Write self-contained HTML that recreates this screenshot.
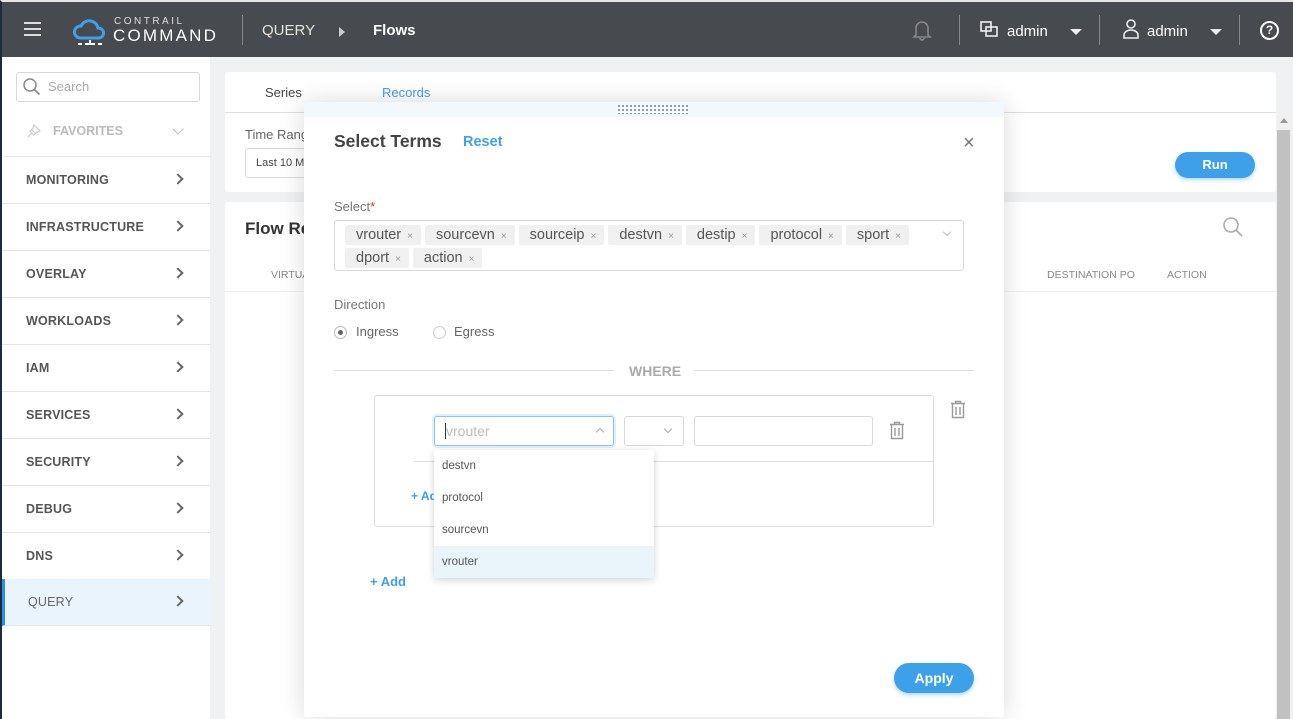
<!DOCTYPE html>
<html><head><meta charset="utf-8"><style>
*{box-sizing:border-box;margin:0;padding:0}
body{width:1293px;height:719px;overflow:hidden;background:#f0f1f2;font-family:"Liberation Sans",sans-serif;position:relative;color:#555}
.a{position:absolute}
.hdr{left:0;top:0;width:1293px;height:57px;background:#474a4f;border-top:2px solid #e6e6e6;border-left:2px solid #1d2a3f}
.hdr .t{color:#fff;font-size:15px}
.sb{left:0;top:57px;width:210px;height:662px;background:#fff;border-left:2px solid #1d2a3f}
.item{position:absolute;left:2px;width:208px;height:47px;border-bottom:1px solid #e5e5e5;font-size:12.5px;font-weight:bold;color:#555;padding:16px 0 0 24px;letter-spacing:.2px}
.item .ch{position:absolute;right:28px;top:18px;width:8px;height:8px;border-right:2px solid #666;border-top:2px solid #666;transform:rotate(45deg)}
.card{background:#fff;border-radius:3px}
.tag{display:inline-block;background:#f0f0f0;border-radius:2px;height:20px;padding:0 8px 0 11px;font-size:14.5px;color:#555;line-height:20px;margin:0 4px 3px 0}
.tag i{font-style:normal;font-size:10px;color:#999;margin-left:6px}
.inp{border:1px solid #d9d9d9;border-radius:3px;background:#fff}
</style></head><body>
<div class="a hdr">
 <div class="a" style="left:22px;top:20px;width:17px;height:2px;background:#ddd;box-shadow:0 6px 0 #ddd,0 12px 0 #ddd"></div>
 <svg class="a" style="left:70px;top:14px" width="36" height="30" viewBox="0 0 36 30"><path d="M8 22a6 6 0 0 1 1-12 9 9 0 0 1 17 2 5 5 0 0 1 1 10z" fill="none" stroke="#3fa0ea" stroke-width="3"/><path d="M6 28h4M13 28h10M26 28h4M18 24v4" stroke="#fff" stroke-width="2"/></svg>
 <div class="a" style="left:112px;top:14px;color:#ddd;font-size:10px;letter-spacing:2.5px">CONTRAIL</div>
 <div class="a" style="left:111px;top:24px;color:#fff;font-size:17px;letter-spacing:2.2px">COMMAND</div>
 <div class="a" style="left:240px;top:13px;width:1px;height:30px;background:#888"></div>
 <div class="a t" style="left:260px;top:20px;color:#e8e6d8;font-size:15px">QUERY</div>
 <div class="a" style="left:337px;top:25px;border-left:6px solid #ccc;border-top:5px solid transparent;border-bottom:5px solid transparent"></div>
 <div class="a t" style="left:371px;top:20px;font-weight:bold">Flows</div>
 <svg class="a" style="left:910px;top:17px" width="20" height="22"><path d="M4 16V9a6 6 0 0 1 12 0v7l2 2H2z M8 19a2 2 0 0 0 4 0" fill="none" stroke="#888" stroke-width="1.6"/></svg>
 <div class="a" style="left:957px;top:13px;width:1px;height:30px;background:#888"></div>
 <svg class="a" style="left:977px;top:18px" width="22" height="20"><rect x="2" y="2" width="10" height="9" fill="none" stroke="#eee" stroke-width="1.6"/><rect x="7" y="7" width="11" height="9" fill="none" stroke="#eee" stroke-width="1.6"/></svg>
 <div class="a t" style="left:1005px;top:21px">admin</div>
 <div class="a" style="left:1068px;top:27px;border-top:6px solid #eee;border-left:6px solid transparent;border-right:6px solid transparent"></div>
 <div class="a" style="left:1097px;top:13px;width:1px;height:30px;background:#888"></div>
 <svg class="a" style="left:1119px;top:16px" width="20" height="22"><circle cx="10" cy="6" r="4" fill="none" stroke="#eee" stroke-width="1.6"/><path d="M3 20v-3a7 5 0 0 1 14 0v3z" fill="none" stroke="#eee" stroke-width="1.6"/></svg>
 <div class="a t" style="left:1145px;top:21px">admin</div>
 <div class="a" style="left:1208px;top:27px;border-top:6px solid #eee;border-left:6px solid transparent;border-right:6px solid transparent"></div>
 <div class="a" style="left:1237px;top:13px;width:1px;height:30px;background:#888"></div>
 <div class="a" style="left:1258px;top:19px;width:19px;height:19px;border:2px solid #fff;border-radius:50%;color:#fff;font-size:12px;font-weight:bold;text-align:center;line-height:15px">?</div>
</div>
<div class="a sb">
 <div class="a inp" style="left:14px;top:15px;width:184px;height:30px"></div>
 <svg class="a" style="left:20px;top:20px" width="20" height="20"><circle cx="8" cy="8" r="6" fill="none" stroke="#888" stroke-width="1.5"/><path d="M12.5 12.5l5 5" stroke="#888" stroke-width="1.6"/></svg>
 <div class="a" style="left:46px;top:22px;color:#aaa;font-size:13px">Search</div>
 <svg class="a" style="left:24px;top:66px" width="16" height="16"><path d="M2 14l4-4M5 6l5 5M8 2l6 6-3 1-3 3-1-1-2-2-1-1 3-3z" fill="none" stroke="#ccc" stroke-width="1.2"/></svg>
 <div class="a" style="left:51px;top:67px;color:#bbb;font-size:12.5px;font-weight:bold">FAVORITES</div>
 <div class="a" style="left:172px;top:68px;width:8px;height:8px;border-right:1.5px solid #bbb;border-bottom:1.5px solid #bbb;transform:rotate(45deg)"></div>
 <div class="a" style="left:2px;top:99px;width:208px;height:1px;background:#e5e5e5"></div>
</div>
<div class="item" style="top:157px">MONITORING<span class="ch"></span></div>
<div class="item" style="top:204px">INFRASTRUCTURE<span class="ch"></span></div>
<div class="item" style="top:251px">OVERLAY<span class="ch"></span></div>
<div class="item" style="top:298px">WORKLOADS<span class="ch"></span></div>
<div class="item" style="top:345px">IAM<span class="ch"></span></div>
<div class="item" style="top:392px">SERVICES<span class="ch"></span></div>
<div class="item" style="top:439px">SECURITY<span class="ch"></span></div>
<div class="item" style="top:486px">DEBUG<span class="ch"></span></div>
<div class="item" style="top:533px">DNS<span class="ch"></span></div>
<div class="item" style="top:579px;height:47px;background:#eaf4fd;border-left:3px solid #2d8fe0;font-weight:normal;color:#666;padding-left:23px">QUERY<span class="ch"></span></div>

<div class="a card" style="left:225px;top:72px;width:1051px;height:120px"></div>
<div class="a" style="left:225px;top:112px;width:1051px;height:1px;background:#ddd"></div>
<div class="a" style="left:265px;top:85px;font-size:13px;color:#444">Series</div>
<div class="a" style="left:382px;top:85px;font-size:13px;color:#3fa0ea">Records</div>
<div class="a" style="left:245px;top:127px;font-size:13px;color:#666">Time Rang</div>
<div class="a inp" style="left:245px;top:148px;width:80px;height:30px;font-size:11px;padding:8px 10px;color:#444">Last 10 Mi</div>
<div class="a" style="left:1175px;top:152px;width:80px;height:26px;background:#3fa0ea;border-radius:13px;color:#fff;font-weight:bold;font-size:13px;text-align:center;line-height:26px;box-shadow:0 2px 4px rgba(63,160,234,.4)">Run</div>
<div class="a card" style="left:225px;top:202px;width:1051px;height:517px"></div>
<div class="a" style="left:245px;top:219px;font-size:17px;font-weight:bold;color:#333">Flow Re</div>
<svg class="a" style="left:1222px;top:216px" width="22" height="22"><circle cx="9" cy="9" r="7" fill="none" stroke="#aaa" stroke-width="1.5"/><path d="M14 14l6 6" stroke="#aaa" stroke-width="1.6"/></svg>
<div class="a" style="left:271px;top:269px;font-size:10.5px;color:#888">VIRTUA</div>
<div class="a" style="left:1047px;top:269px;font-size:10.5px;color:#888">DESTINATION PO</div>
<div class="a" style="left:1167px;top:269px;font-size:10.5px;color:#888">ACTION</div>
<div class="a" style="left:225px;top:291px;width:1051px;height:1px;background:#eee"></div>
<div class="a" style="left:1277px;top:113px;width:16px;height:606px;background:#f0f0f0"></div>
<div class="a" style="left:1277px;top:130px;width:13px;height:589px;background:#c1c1c1"></div>
<div class="a" style="left:1280px;top:118px;border-bottom:5px solid #999;border-left:4px solid transparent;border-right:4px solid transparent"></div>

<div class="a" style="left:304px;top:102px;width:700px;height:615px;background:#fff;border-radius:3px;box-shadow:0 0 25px rgba(0,0,0,.15)">
 <div class="a" style="left:0;top:0;width:700px;height:15px;background:#f3f8fc"></div>
 <div class="a" style="left:313px;top:2px;width:73px;height:10px;background-image:radial-gradient(#777 0.8px,transparent 1px);background-size:4px 4px"></div>
 <div class="a" style="left:30px;top:29px;font-size:17.5px;color:#444;font-weight:bold">Select Terms</div>
 <div class="a" style="left:159px;top:32px;font-size:14.5px;color:#3fa0ea;font-weight:bold">Reset</div>
 <div class="a" style="left:659px;top:30px;font-size:20px;color:#777">×</div>
 <div class="a" style="left:30px;top:97px;font-size:13px;color:#777">Select<span style="color:#f5222d">*</span></div>
 <div class="a inp" style="left:30px;top:118px;width:630px;height:51px;padding:4px 0 0 10px">
  <span class="tag">vrouter<i>×</i></span><span class="tag">sourcevn<i>×</i></span><span class="tag">sourceip<i>×</i></span><span class="tag">destvn<i>×</i></span><span class="tag">destip<i>×</i></span><span class="tag">protocol<i>×</i></span><span class="tag">sport<i>×</i></span><br><span class="tag">dport<i>×</i></span><span class="tag">action<i>×</i></span>
  <div class="a" style="left:609px;top:8px;width:6px;height:6px;border-right:1px solid #bbb;border-bottom:1px solid #bbb;transform:rotate(45deg)"></div>
 </div>
 <div class="a" style="left:30px;top:195px;font-size:13px;color:#777">Direction</div>
 <div class="a" style="left:30px;top:224px;width:13px;height:13px;border:1px solid #bbb;border-radius:50%"><div style="margin:3px;width:5px;height:5px;background:#666;border-radius:50%"></div></div>
 <div class="a" style="left:52px;top:222px;font-size:13px;color:#666">Ingress</div>
 <div class="a" style="left:129px;top:224px;width:13px;height:13px;border:1px solid #ccc;border-radius:50%"></div>
 <div class="a" style="left:150px;top:222px;font-size:13px;color:#666">Egress</div>
 <div class="a" style="left:30px;top:268px;width:280px;height:1px;background:#ddd"></div>
 <div class="a" style="left:325px;top:261px;font-size:14px;color:#aaa;font-weight:bold">WHERE</div>
 <div class="a" style="left:390px;top:268px;width:280px;height:1px;background:#ddd"></div>
 <div class="a" style="left:70px;top:293px;width:560px;height:132px;border:1px solid #ddd;border-radius:3px"></div>
 <div class="a" style="left:110px;top:359px;width:520px;height:1px;background:#ddd"></div>
 <div class="a" style="left:107px;top:387px;font-size:12px;color:#3fa0ea;font-weight:bold">+ Ad</div>
 <div class="a inp" style="left:130px;top:314px;width:180px;height:30px;border-color:#8cc4f0;box-shadow:0 0 0 2px #e0effb;font-size:14px;color:#bbb;padding:6px 10px"><span style="border-left:1px solid #333"></span>vrouter
  <div class="a" style="left:162px;top:12px;width:6px;height:6px;border-left:1px solid #aaa;border-top:1px solid #aaa;transform:rotate(45deg)"></div></div>
 <div class="a inp" style="left:320px;top:314px;width:60px;height:30px"><div class="a" style="left:40px;top:9px;width:6px;height:6px;border-right:1px solid #aaa;border-bottom:1px solid #aaa;transform:rotate(45deg)"></div></div>
 <div class="a inp" style="left:390px;top:314px;width:179px;height:30px"></div>
 <svg class="a" style="left:585px;top:319px" width="16" height="20"><path d="M5.5 3V1.5h5V3M1 3.5h14M2.5 4v13.5h11V4M6 7v8M10 7v8" fill="none" stroke="#999" stroke-width="1.4"/></svg>
 <svg class="a" style="left:646px;top:298px" width="16" height="20"><path d="M5.5 3V1.5h5V3M1 3.5h14M2.5 4v13.5h11V4M6 7v8M10 7v8" fill="none" stroke="#999" stroke-width="1.4"/></svg>
 <div class="a" style="left:130px;top:348px;width:220px;height:128px;background:#fff;border-radius:3px;box-shadow:0 2px 8px rgba(0,0,0,.18);font-size:11.5px;color:#555">
  <div style="height:32px;padding:10px 8px">destvn</div>
  <div style="height:32px;padding:10px 8px">protocol</div>
  <div style="height:32px;padding:10px 8px">sourcevn</div>
  <div style="height:32px;padding:10px 8px;background:#eaf4fb">vrouter</div>
 </div>
 <div class="a" style="left:66px;top:472px;font-size:13px;color:#3fa0ea;font-weight:bold">+ Add</div>
 <div class="a" style="left:590px;top:561px;width:80px;height:30px;background:#3fa0ea;border-radius:15px;color:#fff;font-weight:bold;font-size:14px;text-align:center;line-height:31px;box-shadow:0 2px 4px rgba(63,160,234,.4)">Apply</div>
</div>
</body></html>
